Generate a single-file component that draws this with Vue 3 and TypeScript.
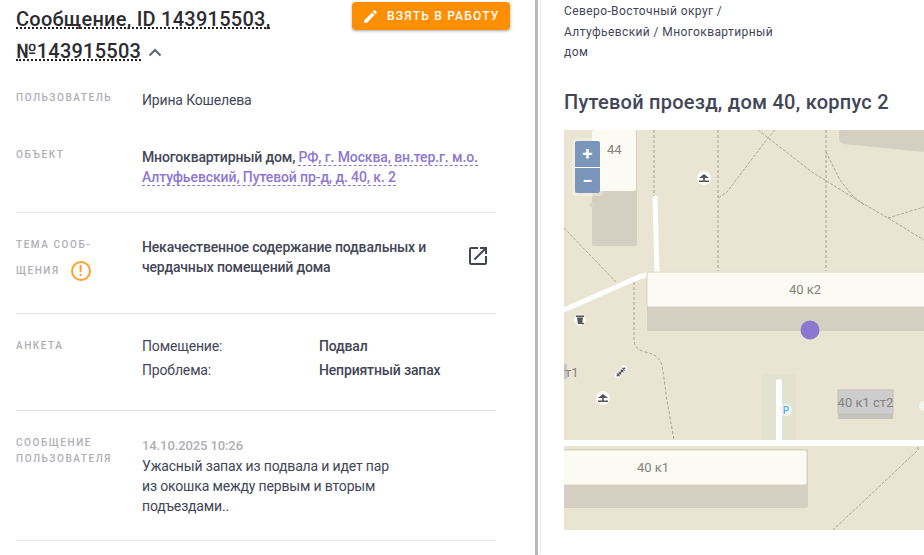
<script setup lang="ts">
interface Line { d: string; thin?: boolean }
const dashes: Line[] = [
  { d: 'M654 130V200' }, { d: 'M718 130V272' }, { d: 'M826 130V272' },
  { d: 'M634 282V340Q634 349 645 352Q660 355 662 366Q664 376 666 395L674 440' },
  { d: 'M758 130L812 172L857 200L888 218L924 240', thin: true },
  { d: 'M775 130L768 138L727 192L718 198', thin: true },
  { d: 'M826 152L840 180L852 195L864 205', thin: true },
  { d: 'M888 218L924 207', thin: true },
  { d: 'M564 228L616 282', thin: true },
  { d: 'M918 447V450L833 530', thin: true }
];
</script>

<template>
  <div class="page">
    <section class="left">
      <header class="head">
        <h1 class="title">
          <div class="tline"><span class="dotted">Сообщение, ID 143915503,</span></div>
          <div class="tline">
            <span class="dotted">№143915503</span>
            <svg class="chev" viewBox="0 0 14 9" width="14" height="9"><path d="M1.500 7.500L7 2l5.500 5.500" fill="none" stroke="#5f6570" stroke-width="2" /></svg>
          </div>
        </h1>
        <button class="take" type="button">
          <svg viewBox="0 0 24 24" width="17" height="17"><path fill="#fff" d="M3 17.250V21h3.750L17.810 9.940l-3.750-3.750L3 17.250zM20.710 7.040a1 1 0 0 0 0-1.410l-2.340-2.340a1 1 0 0 0-1.410 0l-1.830 1.830 3.750 3.750 1.830-1.830z" /></svg>
          <span>ВЗЯТЬ В РАБОТУ</span>
        </button>
      </header>

      <div class="row first">
        <div class="label">ПОЛЬЗОВАТЕЛЬ</div>
        <div class="value">Ирина Кошелева</div>
      </div>

      <div class="row object">
        <div class="label">ОБЪЕКТ</div>
        <div class="value strong">Многоквартирный дом, <span class="link">РФ, г. Москва, вн.тер.г. м.о.</span><br /><span class="link">Алтуфьевский, Путевой пр-д, д. 40, к. 2</span></div>
      </div>

      <div class="row topic">
        <div class="label tall">ТЕМА СООБ-<br />ЩЕНИЯ
          <span class="warn">!</span>
        </div>
        <div class="value strong">Некачественное содержание подвальных и чердачных помещений дома</div>
        <svg class="ext" viewBox="0 0 24 24" width="24" height="24"><path fill="#434656" d="M19 19H5V5h7V3H5a2 2 0 0 0-2 2v14a2 2 0 0 0 2 2h14a2 2 0 0 0 2-2v-7h-2v7zM14 3v2h3.590l-9.830 9.830 1.410 1.410L19 6.410V10h2V3h-7z" /></svg>
      </div>

      <div class="row form">
        <div class="label">АНКЕТА</div>
        <div class="pairs">
          <span>Помещение:</span><b>Подвал</b>
          <span>Проблема:</span><b>Неприятный запах</b>
        </div>
      </div>

      <div class="row msg">
        <div class="label two">СООБЩЕНИЕ<br />ПОЛЬЗОВАТЕЛЯ</div>
        <div class="value text">
          <div class="date">14.10.2025 10:26</div>
          Ужасный запах из подвала и идет пар из окошка между первым и вторым подъездами..
        </div>
      </div>
    </section>

    <div class="divider"></div>

    <section class="right">
      <p class="crumbs">Северо-Восточный округ / Алтуфьевский / Многоквартирный дом</p>
      <h2 class="addr">Путевой проезд, дом 40, корпус 2</h2>
      <div class="map">
        <svg class="canvas" width="360" height="400" viewBox="564 130 360 400">
          <rect x="564" y="130" width="360" height="400" fill="#e9e5d2" />
          <path d="M839 130H924V152L844 144Q839 143 839 138Z" fill="#d5cfc1" />
          <rect x="592" y="130" width="45" height="116" rx="2" fill="#d5cfc1" />
          <rect x="592" y="130" width="44" height="61" rx="2" fill="#fbfaf3" />
          <rect x="762" y="374" width="34" height="70" fill="#e3e2d1" />
          <g fill="none">
            <path v-for="(l, i) in dashes" :key="i" :d="l.d" :class="l.thin ? 'dash thin' : 'dash'" />
          </g>
          <path d="M655 198L657 272" stroke="#fff" stroke-width="5" stroke-linecap="round" fill="none" />
          <path d="M564 310L632 280Q640 276 652 274H924" stroke="#fff" stroke-width="5" fill="none" />
          <path d="M779 382V442" stroke="#fff" stroke-width="6" stroke-linecap="round" fill="none" />
          <path d="M564 443H924" stroke="#fff" stroke-width="6" />
          <rect x="647" y="272" width="290" height="59" rx="2" fill="#d5cfc1" />
          <rect x="647" y="272" width="290" height="35" rx="2" fill="#fbfaf3" stroke="#d9d4c2" />
          <rect x="540" y="449" width="268" height="59" rx="2" fill="#d5cfc1" />
          <rect x="540" y="450" width="267" height="35" rx="2" fill="#fbfaf3" stroke="#d9d4c2" />
          <rect x="838" y="390" width="55" height="29" fill="#c4c4bd" />
          <rect x="838" y="390" width="55" height="24" fill="#cdcdcd" stroke="#c0c0b8" />
          <rect x="564" y="364" width="3" height="15" fill="#c6c6c6" />
          <circle cx="786" cy="410" r="6" fill="#f3f5f1" />
          <circle cx="924" cy="406" r="5" fill="#f3f5f1" />
          <circle cx="592" cy="205" r="2.500" fill="#d8d6ca" />
          <g class="lbl">
            <text x="607" y="154">44</text>
            <text x="805" y="294" text-anchor="middle">40 к2</text>
            <text x="653" y="472" text-anchor="middle">40 к1</text>
            <text x="865.500" y="407" text-anchor="middle">40 к1 ст2</text>
            <text x="565" y="377">т1</text>
          </g>
          <text x="786" y="414" text-anchor="middle" class="park">P</text>
          <circle cx="810" cy="330" r="9.500" fill="#8d78d0" />
          <g transform="translate(704 178)">
            <circle r="7" fill="#fff" opacity=".85" />
            <path d="M-5 0L0 -4L5 0Z M-0.800 0H0.800V2.500H-0.800Z M-5 2.500H5V4H-5Z" fill="#55555a" />
          </g>
          <g transform="translate(603 398)">
            <circle r="7" fill="#fff" opacity=".85" />
            <path d="M-5 0L0 -4L5 0Z M-0.800 0H0.800V2.500H-0.800Z M-5 2.500H5V4H-5Z" fill="#55555a" />
          </g>
          <g transform="translate(580 320)">
            <circle r="6" fill="#fff" opacity=".7" />
            <path d="M-4 -4.500H4V-3H-4Z M-3 -2.500H3L2 4H-2Z" fill="#55555a" />
            <circle cx="3" cy="3.500" r="1" fill="#55555a" />
          </g>
          <g transform="translate(621 372) rotate(-45)">
            <rect x="-7.500" y="-3" width="15" height="6" rx="3" fill="#fff" />
            <path d="M-6 0H6M-4 -2V2M-1.500 -2V2M1.500 -2V2M4 -2V2" stroke="#55555a" stroke-width="1.200" />
          </g>
        </svg>
        <div class="zoom">
          <div class="zoom-inner">
            <span class="zbtn">+</span>
            <span class="zbtn">−</span>
          </div>
        </div>
      </div>
    </section>
  </div>
</template>

<style>
html, body { margin: 0; padding: 0; background: #fff; overflow: hidden; }
</style>

<style scoped>
.page {
  width: 924px;
  height: 555px;
  display: flex;
  overflow: hidden;
  font-family: Roboto, "Noto Sans", sans-serif;
  color: #434656;
  font-size: 14px;
}
.left { width: 480px; padding-left: 16px; padding-right: 39px; flex: none; }
.divider { width: 3px; flex: none; background: #b9b9bd; margin-right: 2px; box-shadow: 4px 0 0 -1px #e6e6e6; }
.right { flex: 1; padding-left: 24px; min-width: 0; overflow: hidden; }

.head { display: flex; justify-content: space-between; align-items: flex-start; height: 66px; }
.title { margin: 0; padding-top: 9px; font-size: 20px; font-weight: 500; letter-spacing: .25px; color: #2c2c30; white-space: nowrap; }
.tline { display: flex; align-items: flex-start; height: 32px; }
.dotted { display: block; height: 18px; line-height: 20px; border-bottom: 2px dotted #222; }
.chev { margin: 7px 0 0 7px; }
.take {
  display: flex; align-items: center; gap: 8px;
  height: 28px; width: 158px; margin: 2px 0 0 0; padding: 0 0 0 10px;
  position: relative; left: 14px;
  border: 0; border-radius: 4px; background: #ff8f00; color: #fff;
  font: 500 12px Roboto, sans-serif; letter-spacing: 1.2px;
  box-shadow: 0 1px 3px rgba(0,0,0,.35);
}

.row { display: flex; position: relative; border-bottom: 1px solid #e2e2e2; width: 480px; }
.label {
  width: 126px; flex: none;
  font-size: 10px; font-weight: 500; letter-spacing: 1.55px; color: #aeaeb4; line-height: 16px;
}
.value { width: 340px; line-height: 20px; letter-spacing: -.16px; }
.strong { font-weight: 500; }
.first { border: 0; height: 57px; padding-top: 24px; }
.first .label { line-height: 14px; padding-top: 1px; }
.object { height: 65px; }
.link { color: #8d78d0; border-bottom: 1px dashed #8d78d0; letter-spacing: -.1px; }
.topic { height: 75px; padding-top: 25px; }
.topic .value { width: 290px; margin-top: -1px; }
.tall { line-height: 26px; margin-top: -6px; }
.warn {
  display: inline-flex; align-items: center; justify-content: center;
  width: 16px; height: 16px; margin-left: 7px; box-sizing: content-box;
  border: 2px solid #ff9f2a; border-radius: 50%;
  color: #ff9f2a; font-size: 14px; font-weight: 700; letter-spacing: 0; vertical-align: middle;
}
.ext { position: absolute; left: 450px; top: 31px; }
.form { height: 70px; padding-top: 26px; }
.form .label { line-height: 12px; }
.pairs { display: grid; grid-template-columns: 177px auto; grid-auto-rows: 24px; line-height: 20px; margin-top: -4px; letter-spacing: -.16px; }
.pairs b { font-weight: 500; }
.msg { height: 105px; padding-top: 24px; }
.two { line-height: 16px; }
.text { width: 250px; line-height: 20px; }
.date { font-weight: 500; font-size: 13px; letter-spacing: -.1px; color: #aeaeb4; line-height: 21px; }

.crumbs { margin: 0; padding-top: 1px; width: 225px; font-size: 12px; line-height: 20.500px; letter-spacing: .4px; color: #434656; height: 61px; }
.addr { margin: 28px 0 0; font-size: 20px; font-weight: 500; line-height: 24px; letter-spacing: .25px; color: #434656; white-space: nowrap; }
.map { position: relative; width: 360px; height: 400px; margin-top: 16px; overflow: hidden; }
.canvas { display: block; }
.dash { stroke: #a5a293; stroke-width: 1; stroke-dasharray: 3 2; }
.dash.thin { stroke: #9a9788; stroke-width: .8; stroke-dasharray: 3 1.500; }
.lbl text { font: 13px Roboto, sans-serif; fill: #83827b; }
.park { font: 500 10px Roboto, sans-serif; fill: #55b0f0; }
.zoom { position: absolute; left: 8px; top: 8px; padding: 3px; background: rgba(255,255,255,.3); border-radius: 4px; }
.zoom-inner { display: flex; flex-direction: column; gap: 1px; background: #fff; border-radius: 2px; overflow: hidden; }
.zbtn {
  display: flex; align-items: center; justify-content: center;
  width: 25px; height: 25.500px; background: #7a97bb; color: #fff;
  font: 700 18px Roboto, sans-serif;
}
</style>
